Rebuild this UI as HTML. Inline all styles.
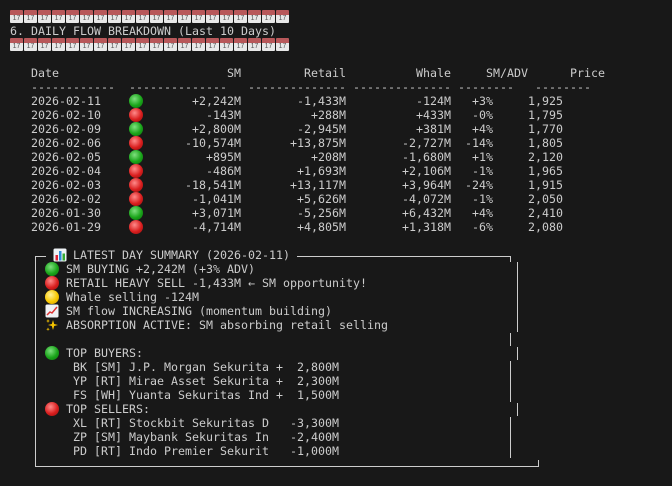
<!DOCTYPE html>
<html><head><meta charset="utf-8"><style>
html,body{margin:0;padding:0;background:#181818;}
body{width:672px;height:486px;position:relative;overflow:hidden;font-family:"DejaVu Sans Mono","Liberation Mono",monospace;font-size:11.63px;color:#cccccc;}
.l{position:absolute;white-space:pre;height:14px;line-height:14px;}
.r{position:absolute;white-space:pre;line-height:14px;text-align:right;}
.cal{position:absolute;left:10px;height:14px;display:flex;}
.cal span{display:inline-block;width:13px;height:13px;margin-right:1px;background:linear-gradient(#b8585a 0,#b8585a 5px,#e8e8e8 5px);font-size:7px;line-height:8px;padding-top:5px;box-sizing:border-box;text-align:center;color:#555;font-family:"Liberation Sans",sans-serif;border-radius:1px}
.d{position:absolute;width:14px;height:14px;border-radius:50%;}
.g{background:radial-gradient(circle at 40% 35%,#7fe07f,#19a419 55%,#0c6e0c);}
.rd{background:radial-gradient(circle at 40% 35%,#ff8a8a,#d91e1e 55%,#8e0d0d);}
.y{background:radial-gradient(circle at 40% 35%,#fff29a,#f8c800 55%,#c99400);}
.v{position:absolute;width:1px;background:#cccccc;}
.h{position:absolute;height:1px;background:#cccccc;}
</style></head><body>
<div class="cal" style="top:10px"><span>17</span><span>17</span><span>17</span><span>17</span><span>17</span><span>17</span><span>17</span><span>17</span><span>17</span><span>17</span><span>17</span><span>17</span><span>17</span><span>17</span><span>17</span><span>17</span><span>17</span><span>17</span><span>17</span><span>17</span></div>
<div class="l" style="top:24px;left:10px">6. DAILY FLOW BREAKDOWN (Last 10 Days)</div>
<div class="cal" style="top:38px"><span>17</span><span>17</span><span>17</span><span>17</span><span>17</span><span>17</span><span>17</span><span>17</span><span>17</span><span>17</span><span>17</span><span>17</span><span>17</span><span>17</span><span>17</span><span>17</span><span>17</span><span>17</span><span>17</span><span>17</span></div>

<div class="l" style="top:66px;left:31px">Date</div>
<div class="r" style="top:66px;right:431px">SM</div>
<div class="r" style="top:66px;right:326px">Retail</div>
<div class="r" style="top:66px;right:221px">Whale</div>
<div class="r" style="top:66px;right:144px">SM/ADV</div>
<div class="r" style="top:66px;right:67px">Price</div>
<div class="l" style="top:80px;left:31px">------------</div>
<div class="l" style="top:80px;left:129px">--------------</div>
<div class="l" style="top:80px;left:248px">--------------</div>
<div class="l" style="top:80px;left:353px">--------------</div>
<div class="l" style="top:80px;left:458px">--------</div>
<div class="l" style="top:80px;left:535px">--------</div>

<div style="position:absolute;top:94px;left:0;width:672px">
<div class="l" style="top:0;left:31px">2026-02-11</div><div class="d g" style="top:0;left:129px"></div><div class="r" style="top:0;right:431px">+2,242M</div><div class="r" style="top:0;right:326px">-1,433M</div><div class="r" style="top:0;right:221px">-124M</div><div class="r" style="top:0;right:179px">+3%</div><div class="r" style="top:0;right:109px">1,925</div>
<div class="l" style="top:14px;left:31px">2026-02-10</div><div class="d rd" style="top:14px;left:129px"></div><div class="r" style="top:14px;right:431px">-143M</div><div class="r" style="top:14px;right:326px">+288M</div><div class="r" style="top:14px;right:221px">+433M</div><div class="r" style="top:14px;right:179px">-0%</div><div class="r" style="top:14px;right:109px">1,795</div>
<div class="l" style="top:28px;left:31px">2026-02-09</div><div class="d g" style="top:28px;left:129px"></div><div class="r" style="top:28px;right:431px">+2,800M</div><div class="r" style="top:28px;right:326px">-2,945M</div><div class="r" style="top:28px;right:221px">+381M</div><div class="r" style="top:28px;right:179px">+4%</div><div class="r" style="top:28px;right:109px">1,770</div>
<div class="l" style="top:42px;left:31px">2026-02-06</div><div class="d rd" style="top:42px;left:129px"></div><div class="r" style="top:42px;right:431px">-10,574M</div><div class="r" style="top:42px;right:326px">+13,875M</div><div class="r" style="top:42px;right:221px">-2,727M</div><div class="r" style="top:42px;right:179px">-14%</div><div class="r" style="top:42px;right:109px">1,805</div>
<div class="l" style="top:56px;left:31px">2026-02-05</div><div class="d g" style="top:56px;left:129px"></div><div class="r" style="top:56px;right:431px">+895M</div><div class="r" style="top:56px;right:326px">+208M</div><div class="r" style="top:56px;right:221px">-1,680M</div><div class="r" style="top:56px;right:179px">+1%</div><div class="r" style="top:56px;right:109px">2,120</div>
<div class="l" style="top:70px;left:31px">2026-02-04</div><div class="d rd" style="top:70px;left:129px"></div><div class="r" style="top:70px;right:431px">-486M</div><div class="r" style="top:70px;right:326px">+1,693M</div><div class="r" style="top:70px;right:221px">+2,106M</div><div class="r" style="top:70px;right:179px">-1%</div><div class="r" style="top:70px;right:109px">1,965</div>
<div class="l" style="top:84px;left:31px">2026-02-03</div><div class="d rd" style="top:84px;left:129px"></div><div class="r" style="top:84px;right:431px">-18,541M</div><div class="r" style="top:84px;right:326px">+13,117M</div><div class="r" style="top:84px;right:221px">+3,964M</div><div class="r" style="top:84px;right:179px">-24%</div><div class="r" style="top:84px;right:109px">1,915</div>
<div class="l" style="top:98px;left:31px">2026-02-02</div><div class="d rd" style="top:98px;left:129px"></div><div class="r" style="top:98px;right:431px">-1,041M</div><div class="r" style="top:98px;right:326px">+5,626M</div><div class="r" style="top:98px;right:221px">-4,072M</div><div class="r" style="top:98px;right:179px">-1%</div><div class="r" style="top:98px;right:109px">2,050</div>
<div class="l" style="top:112px;left:31px">2026-01-30</div><div class="d g" style="top:112px;left:129px"></div><div class="r" style="top:112px;right:431px">+3,071M</div><div class="r" style="top:112px;right:326px">-5,256M</div><div class="r" style="top:112px;right:221px">+6,432M</div><div class="r" style="top:112px;right:179px">+4%</div><div class="r" style="top:112px;right:109px">2,410</div>
<div class="l" style="top:126px;left:31px">2026-01-29</div><div class="d rd" style="top:126px;left:129px"></div><div class="r" style="top:126px;right:431px">-4,714M</div><div class="r" style="top:126px;right:326px">+4,805M</div><div class="r" style="top:126px;right:221px">+1,318M</div><div class="r" style="top:126px;right:179px">-6%</div><div class="r" style="top:126px;right:109px">2,080</div>
</div>

<!-- box borders -->
<div class="h" style="top:256px;left:35px;width:11px"></div>
<div class="h" style="top:256px;left:297px;width:214px"></div>
<div class="v" style="top:256px;left:510px;height:6px"></div>
<div class="v" style="top:256px;left:35px;height:211px"></div>
<div class="v" style="top:262px;left:517px;height:70px"></div>
<div class="v" style="top:333px;left:510px;height:13px"></div>
<div class="v" style="top:347px;left:517px;height:13px"></div>
<div class="v" style="top:361px;left:510px;height:41px"></div>
<div class="v" style="top:403px;left:517px;height:13px"></div>
<div class="v" style="top:417px;left:510px;height:41px"></div>
<div class="h" style="top:466px;left:35px;width:504px"></div>
<div class="v" style="top:460px;left:538px;height:7px"></div>

<svg style="position:absolute;left:53px;top:248px" width="14" height="14" viewBox="0 0 14 14"><rect x="0.5" y="0.5" width="13" height="13" rx="1.5" fill="#eef2f6"/><rect x="2.5" y="7" width="2.5" height="5.5" fill="#d23"/><rect x="6" y="3" width="2.5" height="9.5" fill="#2b8ad8"/><rect x="9.5" y="5.5" width="2.5" height="7" fill="#3a3"/></svg>
<div class="l" style="top:248px;left:73px">LATEST DAY SUMMARY (2026-02-11)</div>

<div class="d g" style="top:262px;left:45px"></div><div class="l" style="top:262px;left:66px">SM BUYING +2,242M (+3% ADV)</div>
<div class="d rd" style="top:276px;left:45px"></div><div class="l" style="top:276px;left:66px">RETAIL HEAVY SELL -1,433M ← SM opportunity!</div>
<div class="d y" style="top:290px;left:45px"></div><div class="l" style="top:290px;left:66px">Whale selling -124M</div>
<svg style="position:absolute;left:45px;top:304px" width="14" height="14" viewBox="0 0 14 14"><rect x="0.5" y="0.5" width="13" height="13" rx="1.5" fill="#eef2f6"/><polyline points="2,11 5,8 7,9 12,3" fill="none" stroke="#d33" stroke-width="1.5"/></svg>
<div class="l" style="top:304px;left:66px">SM flow INCREASING (momentum building)</div>
<svg style="position:absolute;left:45px;top:318px" width="14" height="14" viewBox="0 0 14 14"><path d="M8 2 L9.2 6 L13 7 L9.2 8 L8 12 L6.8 8 L3 7 L6.8 6Z" fill="#f6c400"/><path d="M3 1 L3.6 2.6 L5 3 L3.6 3.4 L3 5 L2.4 3.4 L1 3 L2.4 2.6Z" fill="#f6c400"/><path d="M3 9.5 L3.5 10.8 L4.8 11.2 L3.5 11.6 L3 13 L2.5 11.6 L1.2 11.2 L2.5 10.8Z" fill="#f6c400"/></svg>
<div class="l" style="top:318px;left:66px">ABSORPTION ACTIVE: SM absorbing retail selling</div>

<div class="d g" style="top:346px;left:45px"></div><div class="l" style="top:346px;left:66px">TOP BUYERS:</div>
<div class="l" style="top:360px;left:73px">BK [SM] J.P. Morgan Sekurita +  2,800M</div>
<div class="l" style="top:374px;left:73px">YP [RT] Mirae Asset Sekurita +  2,300M</div>
<div class="l" style="top:388px;left:73px">FS [WH] Yuanta Sekuritas Ind +  1,500M</div>
<div class="d rd" style="top:402px;left:45px"></div><div class="l" style="top:402px;left:66px">TOP SELLERS:</div>
<div class="l" style="top:416px;left:73px">XL [RT] Stockbit Sekuritas D   -3,300M</div>
<div class="l" style="top:430px;left:73px">ZP [SM] Maybank Sekuritas In   -2,400M</div>
<div class="l" style="top:444px;left:73px">PD [RT] Indo Premier Sekurit   -1,000M</div>
</body></html>
